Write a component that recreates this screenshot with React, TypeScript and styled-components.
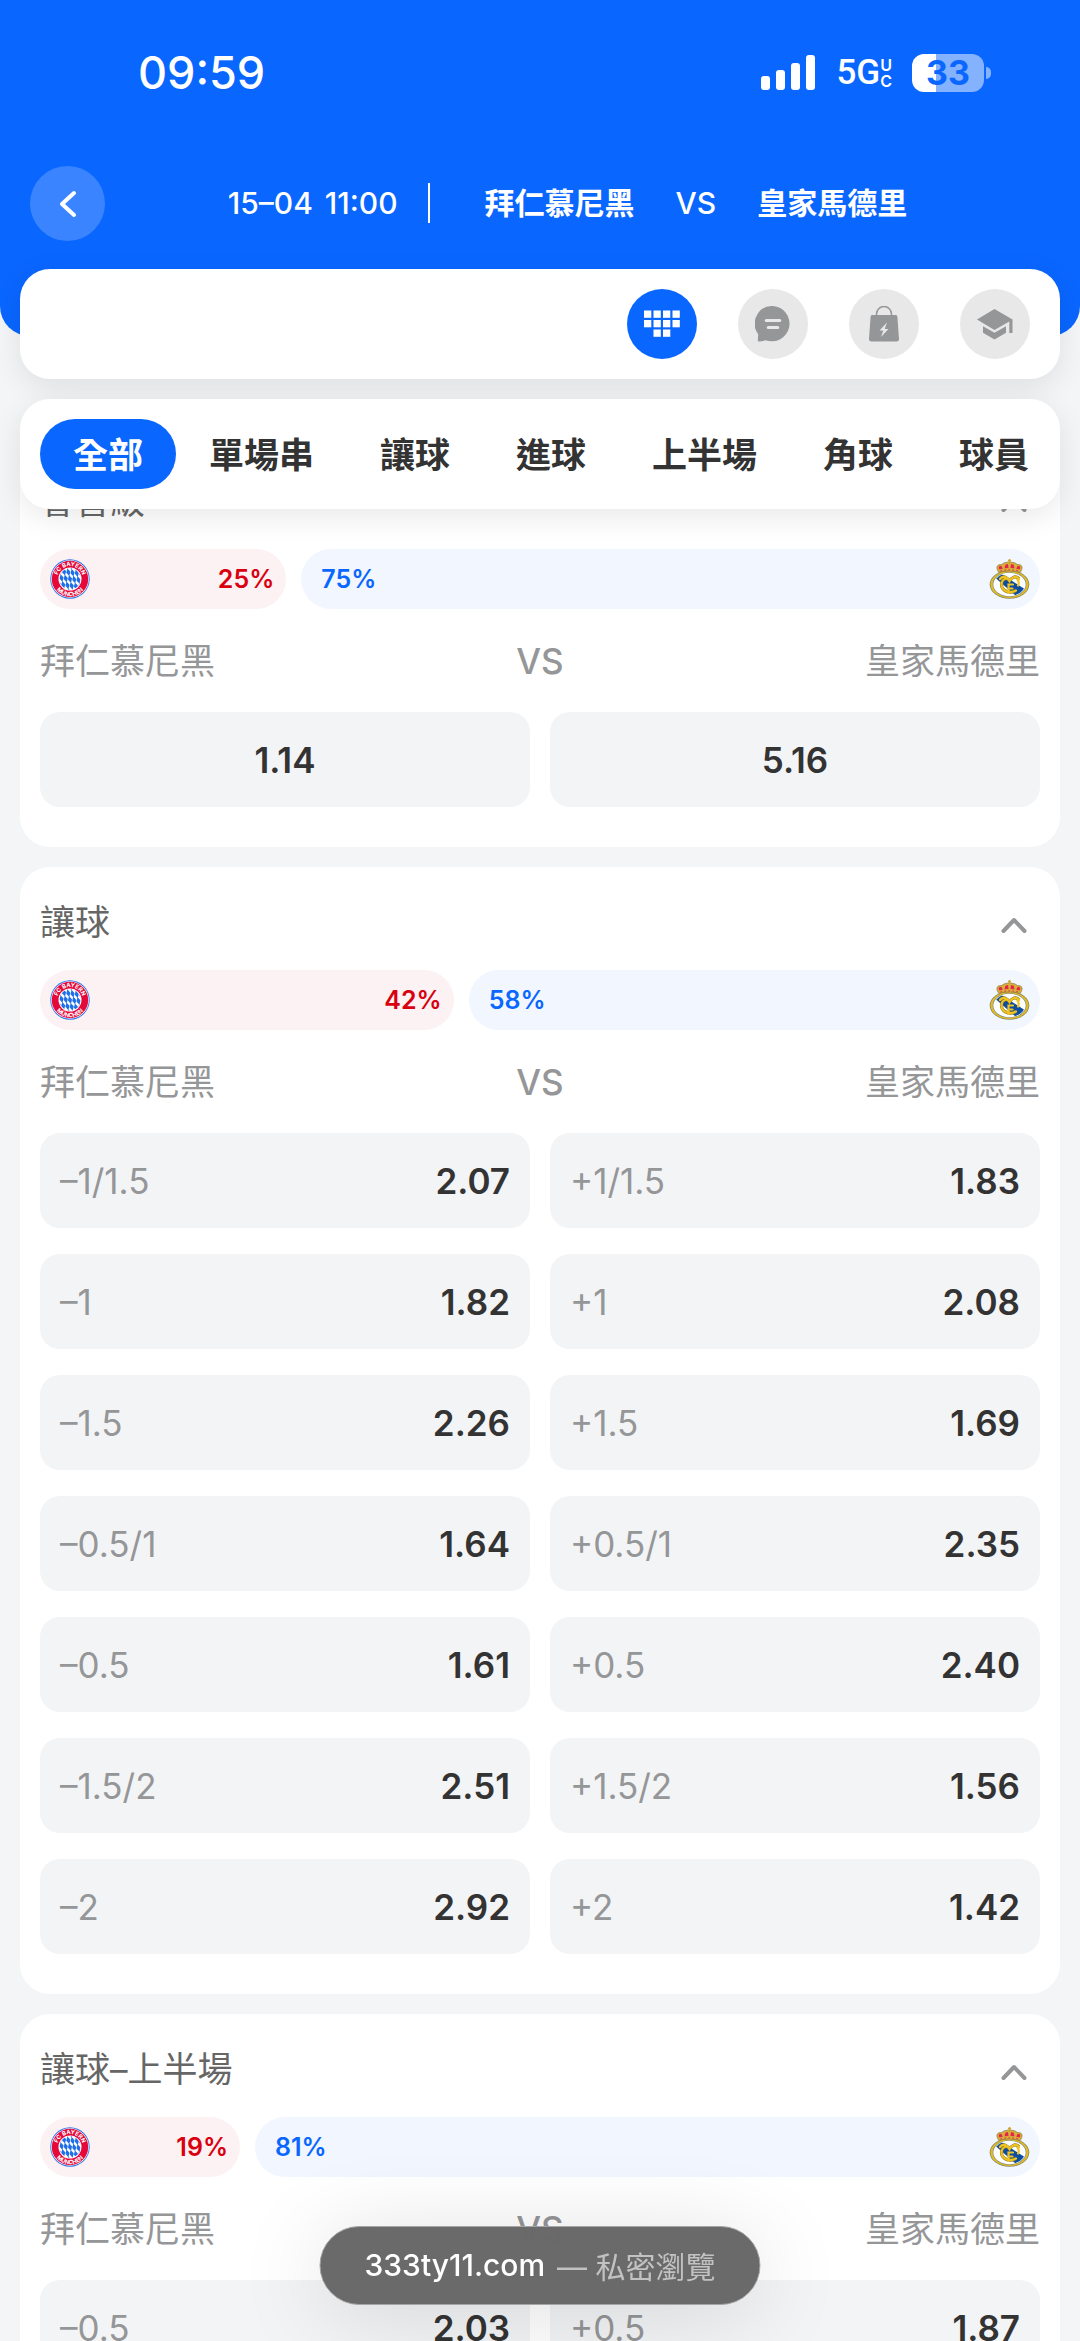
import React, { useState } from "react";
import styled, { createGlobalStyle } from "styled-components";

const Global = createGlobalStyle`
  *, *::before, *::after { box-sizing: border-box; }
  html, body, #root { margin: 0; height: 100%; }
  body {
    background: #f3f5f7;
    color: #333;
    font-family: Inter, "Noto Sans CJK TC", sans-serif;
    font-size: 35px;
    overflow: hidden;
  }
  button { font: inherit; color: inherit; border: 0; padding: 0; margin: 0; background: none; cursor: pointer; }
`;

const Screen = styled.div`
  height: 100vh;
  overflow: hidden;
  background: #f3f5f7;
`;

const Top = styled.header`
  position: relative;
  z-index: 2;
`;

const Hero = styled.div`
  height: 336px;
  margin-bottom: -67px;
  background: #0966ff;
  color: #fff;
  border-radius: 0 0 30px 30px;
`;

const StatusBar = styled.div`
  height: 146px;
  padding: 0 89px 0 138px;
  display: flex;
  align-items: center;
  justify-content: space-between;
`;

const Clock = styled.time`
  font-size: 45px;
  line-height: 48px;
  font-weight: 500;
`;

const StatusIcons = styled.div`
  display: flex;
  align-items: center;
  gap: 20px;
`;

const Network = styled.div`
  display: flex;
  align-items: center;
  font-family: Roboto, sans-serif;
  font-size: 35px;
  line-height: 38px;
  font-weight: 500;
`;

const NetworkSuffix = styled.span`
  display: grid;
  font: 600 16px/16px Inter, sans-serif;
  text-align: center;
`;

const Battery = styled.div`
  display: flex;
  align-items: center;
  gap: 2px;
`;

const BatteryBody = styled.div`
  width: 72px;
  height: 38px;
  border-radius: 12px;
  background: linear-gradient(to right, #fff 33%, #84b2ff 33%);
  color: #0966ff;
  font-size: 34px;
  line-height: 38px;
  font-weight: 700;
  text-align: center;
`;

const BatteryTip = styled.div`
  width: 5px;
  height: 12px;
  border-radius: 0 6px 6px 0;
  background: #84b2ff;
`;

const MatchBar = styled.div`
  height: 115px;
  padding: 0 50px 0 30px;
  display: grid;
  grid-template-columns: 75px 1fr;
  align-items: center;
`;

const BackButton = styled.button`
  width: 75px;
  height: 75px;
  border-radius: 50%;
  background: #3a85ff;
  display: grid;
  place-items: center;
`;

const MatchInfo = styled.div`
  display: flex;
  align-items: center;
  justify-content: center;
  padding-bottom: 2px;
  font-size: 30px;
  line-height: 40px;
  font-weight: 600;
  white-space: nowrap;
`;

const Kickoff = styled.time`
  display: flex;
  gap: 12px;
  padding-right: 30px;
  border-right: 2px solid #fff;
  font-weight: 500;
`;

const Fixture = styled.h1`
  margin: 0 0 0 55px;
  font: inherit;
  display: flex;
  gap: 41px;
`;

const FixtureVersus = styled.span`
  font-weight: 500;
`;

const Panel = styled.div`
  margin: 0 20px;
  height: 110px;
  border-radius: 30px;
  background: #fff;
  box-shadow: 0 8px 30px rgba(0, 0, 0, 0.09);
  display: flex;
  align-items: center;
`;

const Tools = styled(Panel)`
  justify-content: flex-end;
  gap: 41px;
  padding: 0 30px;
`;

const ToolButton = styled.button<{ $active?: boolean }>`
  width: 70px;
  height: 70px;
  border-radius: 50%;
  display: grid;
  place-items: center;
  background: ${(p) => (p.$active ? "#0966ff" : "#e8e8e8")};
  color: ${(p) => (p.$active ? "#fff" : "#959698")};
`;

const Tabs = styled(Panel).attrs({ as: "nav" })`
  margin-top: 20px;
  padding: 0 20px;
  overflow: hidden;
`;

const Tab = styled.button<{ $active: boolean }>`
  flex: none;
  height: 70px;
  padding: 0 33px 4px;
  border-radius: 35px;
  font-weight: 600;
  white-space: nowrap;
  background: ${(p) => (p.$active ? "#0966ff" : "transparent")};
  color: ${(p) => (p.$active ? "#fff" : "#333")};
`;

const Markets = styled.main`
  margin: -63px 20px 0;
  display: flex;
  flex-direction: column;
  gap: 20px;
`;

const Card = styled.section`
  background: #fff;
  border-radius: 30px;
  padding: 20px 20px 40px;
`;

const CardHead = styled.div`
  height: 70px;
  display: flex;
  align-items: center;
  justify-content: space-between;
`;

const CardTitle = styled.h2`
  margin: 0;
  font-size: 35px;
  line-height: 40px;
  font-weight: 400;
  color: #666;
`;

const Toggle = styled.button`
  width: 52px;
  height: 52px;
  padding-top: 5px;
  display: grid;
  place-items: center;
  color: #959698;
`;

const Split = styled.div`
  margin-top: 13px;
  display: grid;
  gap: 15px;
`;

const Share = styled.div<{ $side: "home" | "away" }>`
  height: 60px;
  border-radius: 30px;
  display: flex;
  align-items: center;
  justify-content: space-between;
  font-size: 25px;
  line-height: 30px;
  font-weight: 600;
  padding: ${(p) => (p.$side === "home" ? "0 12px 0 10px" : "0 10px 0 20px")};
  background: ${(p) => (p.$side === "home" ? "#fcf1f3" : "#f1f6ff")};
  color: ${(p) => (p.$side === "home" ? "#d9000f" : "#0966ff")};
`;

const Names = styled.div`
  height: 103px;
  display: grid;
  grid-template-columns: 1fr auto 1fr;
  align-items: center;
  line-height: 40px;
  color: #959698;
`;

const Versus = styled.span`
  font-weight: 500;
`;

const AwayName = styled.span`
  text-align: right;
`;

const Odds = styled.div`
  display: grid;
  grid-template-columns: 1fr 1fr;
  gap: 26px 20px;
`;

const Odd = styled.button<{ $center: boolean }>`
  height: 95px;
  padding: 0 20px;
  border-radius: 20px;
  background: #f3f4f6;
  display: flex;
  align-items: center;
  justify-content: ${(p) => (p.$center ? "center" : "space-between")};
`;

const Line = styled.span`
  color: #959698;
`;

const Price = styled.strong`
  font-weight: 600;
`;

const AddressPill = styled.div`
  position: fixed;
  z-index: 3;
  left: 50%;
  bottom: 36px;
  transform: translateX(-50%);
  height: 79px;
  padding: 0 44px 2px;
  border-radius: 40px;
  border: 1px solid #a5a5a5;
  background: rgba(104, 104, 104, 0.99);
  box-shadow: 0 10px 90px rgba(0, 0, 0, 0.13);
  display: flex;
  align-items: center;
  gap: 12px;
  font-size: 30px;
  color: #c2c2c2;
  white-space: nowrap;
`;

const Host = styled.span`
  color: #fff;
  font-weight: 500;
`;

function BayernCrest() {
  return (
    <svg width="40" height="40" viewBox="0 0 40 40" role="img" aria-label="拜仁慕尼黑">
      <defs>
        <clipPath id="lozenges"><circle cx="20" cy="20" r="10.7" /></clipPath>
        <path id="arcTop" d="M7 20a13 13 0 0 1 26 0" />
        <path id="arcBottom" d="M2.700 20a17.300 17.300 0 0 0 34.600 0" />
      </defs>
      <circle cx="20" cy="20" r="19.700" fill="#2f74e8" />
      <circle cx="20" cy="20" r="18.800" fill="#fff" />
      <circle cx="20" cy="20" r="18.200" fill="#e5093a" />
      <circle cx="20" cy="20" r="11.500" fill="#fff" />
      <g clipPath="url(#lozenges)">
        <g fill="#1f6fe8" transform="rotate(-14 20 20)">
          {[-2, -1, 0, 1, 2].map((r) =>
            [-3, -2, -1, 0, 1, 2, 3].map((c) => (
              <path key={`${r}/${c}`} d={`M${20 + c * 4} ${16 + r * 7 + c * 1.5}l2.100 4-2.100 4-2.100-4z`} />
            ))
          )}
        </g>
      </g>
      <g fill="#fff" fontSize="5.800" fontWeight="700" fontFamily="Inter, sans-serif" textAnchor="middle">
        <text><textPath href="#arcTop" startOffset="50%">FC BAYERN</textPath></text>
        <text><textPath href="#arcBottom" startOffset="50%">MÜNCHEN</textPath></text>
      </g>
    </svg>
  );
}

function MadridCrest() {
  return (
    <svg width="41" height="40" viewBox="0 0 40 40" role="img" aria-label="皇家馬德里">
      <defs><clipPath id="shield"><ellipse cx="20" cy="25.500" rx="15.400" ry="11.400" /></clipPath></defs>
      <ellipse cx="20" cy="25.500" rx="19.800" ry="14.300" fill="#858a62" />
      <ellipse cx="20" cy="25.500" rx="19" ry="13.600" fill="#e6bb22" />
      <ellipse cx="20" cy="25.500" rx="16.800" ry="12.200" fill="#6f8790" />
      <ellipse cx="20" cy="25.500" rx="16.200" ry="11.700" fill="#fff" />
      <path clipPath="url(#shield)" d="M6 19l6-4 26 17-8 8z" fill="#0c4da2" />
      <g fill="none" stroke="#8c7a24" strokeWidth="3.200">
        <path d="M10.500 20c3-4 7-2 9.500 2 2.500-4 6.500-6 9.500-2M26.500 31.500c-7 4-14.500 0-14.500-6 0-4 3-6 6-6" />
      </g>
      <g fill="none" stroke="#f0c322" strokeWidth="2.200" strokeLinecap="round">
        <path d="M10.500 20c3-4 7-2 9.500 2 2.500-4 6.500-6 9.500-2" />
        <path d="M26.500 31.500c-7 4-14.500 0-14.500-6 0-4 3-6 6-6M28 20.500c1.500 2 1.500 4 .5 6M19 34v-8.500h4.500M19 29.500h4" />
      </g>
      <path d="M9.500 13.500C6 9 7 5.200 12 5.600c2-1.800 5-2.600 8-2.600s6 .8 8 2.600c5-.4 6 3.400 2.500 7.900-6-2-15-2-21 0z" fill="#d9ae3a" stroke="#8d7744" strokeWidth=".7" />
      <path d="M10 10.500c-1.500-2.500-.5-3.700 2-3.400l1.300 2.700zM15 9.300l.8-3.500 2.700-.7.500 4zM25 9.300l-.8-3.500-2.700-.7-.5 4zM30 10.500c1.500-2.500.5-3.700-2-3.400l-1.300 2.700z" fill="#e3264a" />
      <path d="M11 12c6-1.600 12-1.600 18 0" stroke="#e3264a" strokeWidth="1" fill="none" strokeDasharray="1.500 2.500" />
      <path d="M20 0v4M18.500 1.500h3" stroke="#cfa72b" strokeWidth="1.300" />
    </svg>
  );
}

const KeypadIcon = () => (
  <svg width="36" height="28" viewBox="0 0 36 28" fill="currentColor" aria-hidden="true">
    {[0, 1, 2, 3].map((c) => <rect key={c} x={c * 9.5} y="0.500" width="7.300" height="7.300" />)}
    {[0, 1, 2, 3].map((c) => <rect key={c} x={c * 9.5} y="10" width="7.300" height="7.300" />)}
    {[1, 2].map((c) => <rect key={c} x={c * 9.5} y="19.500" width="7.300" height="7.300" />)}
  </svg>
);

const ChatIcon = () => (
  <svg width="36" height="36" viewBox="0 0 36 36" aria-hidden="true">
    <path d="M18 0a17.700 17.700 0 1 1-7.500 34.200C8 35 5.500 35.600 3.600 35.400c-.7-.1-.9-.6-.8-1.200l.4-6A17.700 17.700 0 0 1 18 0z" fill="currentColor" />
    <path d="M11.200 14.600h13.600M13.200 21.400h9.600" stroke="#e8e8e8" strokeWidth="3" strokeLinecap="round" />
  </svg>
);

const BagIcon = () => (
  <svg width="32" height="36" viewBox="0 0 32 36" aria-hidden="true">
    <path d="M8.500 10V8a7.500 7.500 0 0 1 15 0v2" fill="none" stroke="currentColor" strokeWidth="1.500" />
    <path d="M4.500 9h23c1.100 0 1.800.7 1.900 1.700L31 33c.1 1.600-.8 2.500-2.300 2.500H3.300C1.800 35.500.9 34.600 1 33l1.600-22.300C2.700 9.700 3.400 9 4.500 9z" fill="currentColor" />
    <path d="M19 16.500l-7.500 8h3.800l-2.300 6.500 7.500-8h-3.800z" fill="#e8e8e8" />
  </svg>
);

const CapIcon = () => (
  <svg width="36" height="31" viewBox="0 0 36 31" fill="currentColor" aria-hidden="true">
    <path d="M17.500 0L35.500 10.500V24h-3.200V12.600L17.500 21 0 10.500z" />
    <path d="M6 17.200l11.500 6.600L29 17.200v6.600L17.500 30.500 6 23.800z" />
  </svg>
);

const markets = [
  { title: "會晉級", home: 25, rows: [["", "1.14", "", "5.16"]] },
  {
    title: "讓球",
    home: 42,
    rows: [
      ["–1/1.5", "2.07", "+1/1.5", "1.83"],
      ["–1", "1.82", "+1", "2.08"],
      ["–1.5", "2.26", "+1.5", "1.69"],
      ["–0.5/1", "1.64", "+0.5/1", "2.35"],
      ["–0.5", "1.61", "+0.5", "2.40"],
      ["–1.5/2", "2.51", "+1.5/2", "1.56"],
      ["–2", "2.92", "+2", "1.42"],
    ],
  },
  { title: "讓球–上半場", home: 19, rows: [["–0.5", "2.03", "+0.5", "1.87"]] },
];

function OddButton({ line, price }: { line: string; price: string }) {
  return (
    <Odd type="button" $center={!line}>
      {line && <Line>{line}</Line>}
      <Price>{price}</Price>
    </Odd>
  );
}

function MarketCard({ title, home, rows }: (typeof markets)[number]) {
  const away = 100 - home;
  return (
    <Card>
      <CardHead>
        <CardTitle>{title}</CardTitle>
        <Toggle type="button" aria-label={`收合${title}`}>
          <svg width="28" height="18" viewBox="0 0 28 18" fill="none" stroke="currentColor" strokeWidth="4" strokeLinecap="round" strokeLinejoin="round" aria-hidden="true">
            <path d="M3.500 15L14 4l10.500 11" />
          </svg>
        </Toggle>
      </CardHead>
      <Split style={{ gridTemplateColumns: `minmax(200px, ${home}fr) ${away}fr` }}>
        <Share $side="home">
          <BayernCrest />
          <span>{home}%</span>
        </Share>
        <Share $side="away">
          <span>{away}%</span>
          <MadridCrest />
        </Share>
      </Split>
      <Names>
        <span>拜仁慕尼黑</span>
        <Versus>VS</Versus>
        <AwayName>皇家馬德里</AwayName>
      </Names>
      <Odds>
        {rows.map(([hl, hp, al, ap]) => (
          <React.Fragment key={hl}>
            <OddButton line={hl} price={hp} />
            <OddButton line={al} price={ap} />
          </React.Fragment>
        ))}
      </Odds>
    </Card>
  );
}

const tabs = ["全部", "單場串", "讓球", "進球", "上半場", "角球", "球員"];
const tools = [
  { label: "盤口", Icon: KeypadIcon },
  { label: "聊天", Icon: ChatIcon },
  { label: "快速投注", Icon: BagIcon },
  { label: "教學", Icon: CapIcon },
];

export default function App() {
  const [tab, setTab] = useState(0);
  const [tool, setTool] = useState(0);
  return (
    <Screen>
      <Global />
      <Top>
        <Hero>
          <StatusBar>
            <Clock>09:59</Clock>
            <StatusIcons>
              <svg width="55" height="36" viewBox="0 0 55 36" fill="#fff" aria-hidden="true">
                <rect x="0" y="21" width="9" height="14" rx="3" />
                <rect x="15" y="15" width="9" height="20" rx="3" />
                <rect x="30" y="8" width="9" height="27" rx="3" />
                <rect x="45" y="0" width="9" height="35" rx="3" />
              </svg>
              <Network>
                5G
                <NetworkSuffix>
                  <span>U</span>
                  <span>C</span>
                </NetworkSuffix>
              </Network>
              <Battery>
                <BatteryBody>33</BatteryBody>
                <BatteryTip />
              </Battery>
            </StatusIcons>
          </StatusBar>
          <MatchBar>
            <BackButton type="button" aria-label="返回">
              <svg width="20" height="28" viewBox="0 0 20 28" fill="none" stroke="#fff" strokeWidth="4" strokeLinecap="round" strokeLinejoin="round" aria-hidden="true">
                <path d="M16 3L4 14l12 11" />
              </svg>
            </BackButton>
            <MatchInfo>
              <Kickoff>
                <span>15–04</span> <span>11:00</span>
              </Kickoff>
              <Fixture>
                <span>拜仁慕尼黑</span>
                <FixtureVersus>VS</FixtureVersus>
                <span>皇家馬德里</span>
              </Fixture>
            </MatchInfo>
          </MatchBar>
        </Hero>
        <Tools>
          {tools.map(({ label, Icon }, i) => (
            <ToolButton key={label} type="button" aria-label={label} $active={i === tool} onClick={() => setTool(i)}>
              <Icon />
            </ToolButton>
          ))}
        </Tools>
        <Tabs>
          {tabs.map((name, i) => (
            <Tab key={name} type="button" $active={i === tab} onClick={() => setTab(i)}>
              {name}
            </Tab>
          ))}
        </Tabs>
      </Top>
      <Markets>
        {markets.map((m) => (
          <MarketCard key={m.title} {...m} />
        ))}
      </Markets>
      <AddressPill>
        <Host>333ty11.com</Host>
        <span>— 私密瀏覽</span>
      </AddressPill>
    </Screen>
  );
}
